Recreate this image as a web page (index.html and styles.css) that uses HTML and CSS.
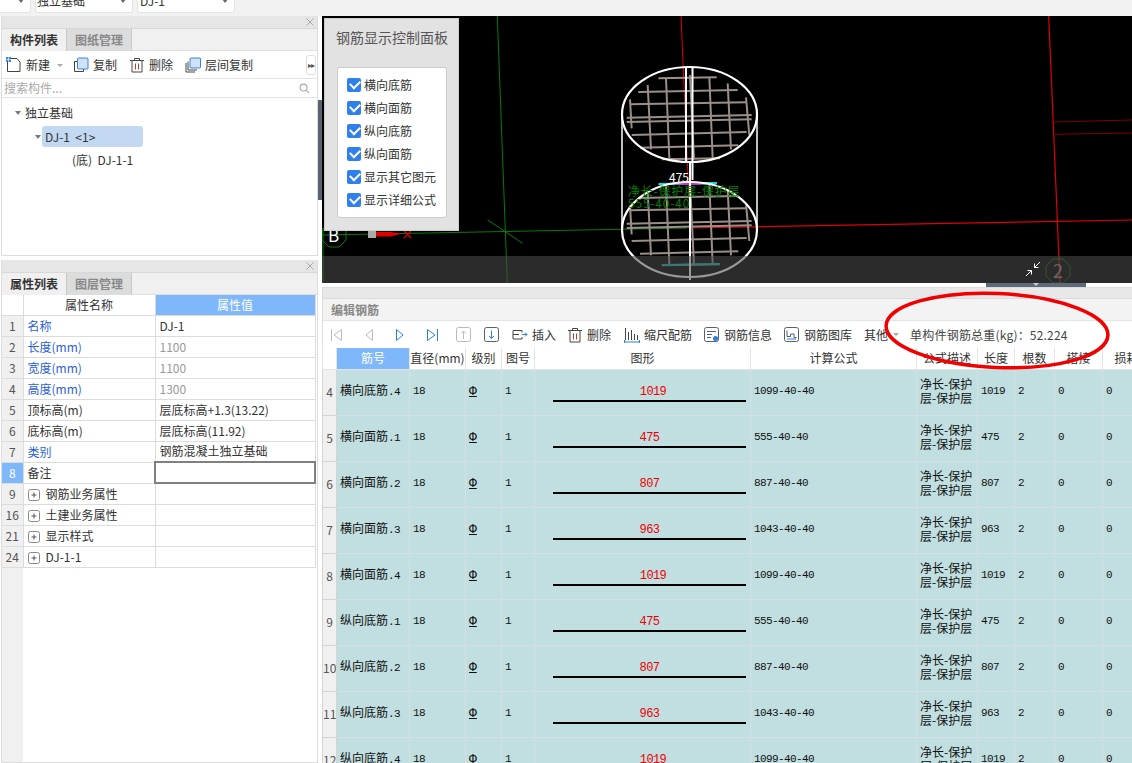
FILE: index.html
```html
<!DOCTYPE html>
<html lang="zh-CN">
<head>
<meta charset="utf-8">
<title>编辑钢筋</title>
<link rel="stylesheet" href="styles.css">
</head>
<body>
<svg class="defs" width="0" height="0" aria-hidden="true">
  <symbol id="i-new" viewBox="0 0 16 16"><path d="M1.500 4.500v10h12.500V5l-3-3.500H4" fill="#fff" stroke="#444"/><rect x="0" y="0" width="5" height="5" fill="#3b82e0"/><path d="M0 2.500h5M2.500 0v5" stroke="#fff" stroke-width=".6"/></symbol>
  <symbol id="i-copy" viewBox="0 0 16 16"><path d="M4 4.500H1.500v10h9V12" fill="none" stroke="#444"/><rect x="4.500" y="1" width="10.500" height="11" rx="1" fill="#cfe2f8" stroke="#3b82e0"/></symbol>
  <symbol id="i-trash" viewBox="0 0 16 16"><path d="M1 3.500h14M5.500 3.500V1.500h5v2M3 3.500v11.500h10V3.500" fill="none" stroke="#444"/><path d="M6.500 6.500v6M9.500 6.500v6" stroke="#d9302a"/></symbol>
  <symbol id="i-layer" viewBox="0 0 16 16"><path d="M1 6v9h9M3 4.500v8.500h9" fill="none" stroke="#444"/><rect x="5" y="1" width="10.500" height="10" rx="1" fill="#cfe2f8" stroke="#3b82e0"/></symbol>
  <symbol id="i-search" viewBox="0 0 12 12"><circle cx="5" cy="5" r="3.800" fill="none" stroke="#aaa" stroke-width="1.200"/><path d="M8 8l3 3" stroke="#aaa" stroke-width="1.200"/></symbol>
  <symbol id="i-close" viewBox="0 0 8 8"><path d="M.5.500l7 7M7.500.500l-7 7" stroke="#a8a8a8"/></symbol>
  <symbol id="i-plus" viewBox="0 0 12 12"><rect x=".5" y=".5" width="11" height="11" rx="2" fill="#fff" stroke="#888"/><path d="M3.500 6h5M6 3.500v5" stroke="#555"/></symbol>
  <symbol id="i-first" viewBox="0 0 11 14"><path d="M.5 1v12M10.500 1.500v11L3 7z" fill="none" stroke="#bbb"/></symbol>
  <symbol id="i-prev" viewBox="0 0 8 14"><path d="M7.500 1.500v11L1 7z" fill="none" stroke="#bbb"/></symbol>
  <symbol id="i-next" viewBox="0 0 8 14"><path d="M.5 1.500v11L7 7z" fill="none" stroke="#2a7de1"/></symbol>
  <symbol id="i-last" viewBox="0 0 11 14"><path d="M10.500 1v12M.5 1.500v11L8 7z" fill="none" stroke="#2a7de1"/></symbol>
  <symbol id="i-up" viewBox="0 0 16 16"><rect x=".5" y=".5" width="14" height="14" rx="2" fill="none" stroke="#bbb"/><path d="M7.500 12V4M5 6.500l2.500-2.500 2.500 2.500" fill="none" stroke="#bbb"/></symbol>
  <symbol id="i-down" viewBox="0 0 16 16"><rect x=".5" y=".5" width="14" height="14" rx="2" fill="none" stroke="#55606e"/><path d="M7.500 3.500v8M5 9l2.500 2.500L10 9" fill="none" stroke="#2a7de1"/></symbol>
  <symbol id="i-insert" viewBox="0 0 16 14"><path d="M10 3.500V1.500H1v8.500h9V8" fill="none" stroke="#444" transform="translate(0 1)"/><path d="M1 6.500h6" stroke="#444"/><path d="M10 6.500h5M13 4.500l2 2-2 2" fill="none" stroke="#2a7de1"/></symbol>
  <symbol id="i-ruler" viewBox="0 0 16 16"><path d="M1.500 1v12M4.500 5v8M7.500 3v10M10.500 7v6M13.500 8v5" stroke="#444"/><path d="M0 15h16M.5 13v3M15.500 13v3" stroke="#2a7de1"/></symbol>
  <symbol id="i-info" viewBox="0 0 16 16"><rect x=".5" y=".5" width="14" height="14" rx="2" fill="none" stroke="#55606e"/><path d="M3 4.500h9M3 7.500h5M3 10.500h4" stroke="#55606e"/><circle cx="11.500" cy="11.500" r="2.500" fill="#2a7de1"/></symbol>
  <symbol id="i-lib" viewBox="0 0 16 16"><rect x=".5" y=".5" width="14" height="14" rx="2" fill="none" stroke="#55606e"/><path d="M3 3.500v6h3.500V7H10v3.500h2.500" fill="none" stroke="#55606e"/><path d="M3 12h9" stroke="#2a7de1"/></symbol>
  <symbol id="i-mesh" viewBox="0 0 450 330">
    <g fill="none" stroke="#9a8e88" stroke-width="6">
      <path d="M130 55L305 52M70 96L368 90M45 133L395 127M35 173L410 165M35 186L410 178M50 225L395 216M75 263L370 256M140 298L315 295"/>
      <path d="M45 118L50 205M98 75L108 268M153 55L163 295M225 45L237 298M283 52L293 295M338 70L348 268M393 112L403 225"/>
    </g>
  </symbol>
</svg>

<div class="app">
  <header class="topbar">
    <div class="select sel-a"><span class="caret"></span></div>
    <div class="select sel-b"><span>独立基础</span><span class="caret"></span></div>
    <div class="select sel-c"><span>DJ-1</span><span class="caret"></span></div>
  </header>

  <div class="main">
    <aside class="side">
      <section class="panel panel-list">
        <div class="panel-head"><svg class="close"><use href="#i-close"/></svg></div>
        <div class="tabs"><div class="tab active">构件列表</div><div class="tab">图纸管理</div></div>
        <div class="tools">
          <svg class="ico"><use href="#i-new"/></svg><span class="tool-label">新建</span><span class="mini-caret"></span>
          <svg class="ico gap-copy"><use href="#i-copy"/></svg><span class="tool-label">复制</span>
          <svg class="ico gap-del"><use href="#i-trash"/></svg><span class="tool-label">删除</span>
          <svg class="ico gap-del"><use href="#i-layer"/></svg><span class="tool-label">层间复制</span>
          <span class="more">▸▸</span>
        </div>
        <div class="search"><span>搜索构件...</span><svg class="search-ico"><use href="#i-search"/></svg></div>
        <div class="tree">
          <div class="node level-1"><span class="tree-caret"></span>独立基础</div>
          <div class="node level-2"><span class="tree-caret"></span><span class="node-sel">DJ-1&nbsp; &lt;1&gt;</span></div>
          <div class="node level-3">(底)&nbsp; DJ-1-1</div>
        </div>
      </section>

      <section class="panel panel-props">
        <div class="panel-head"><svg class="close"><use href="#i-close"/></svg></div>
        <div class="tabs"><div class="tab active">属性列表</div><div class="tab">图层管理</div></div>
        <table class="props">
          <colgroup><col class="p-idx"><col class="p-name"><col class="p-val"></colgroup>
          <thead><tr><th class="idx"></th><th>属性名称</th><th class="hl">属性值</th></tr></thead>
          <tbody>
            <tr><td class="idx">1</td><td class="link">名称</td><td>DJ-1</td></tr>
            <tr><td class="idx">2</td><td class="link">长度(mm)</td><td class="muted">1100</td></tr>
            <tr><td class="idx">3</td><td class="link">宽度(mm)</td><td class="muted">1100</td></tr>
            <tr><td class="idx">4</td><td class="link">高度(mm)</td><td class="muted">1300</td></tr>
            <tr><td class="idx">5</td><td>顶标高(m)</td><td>层底标高+1.3(13.22)</td></tr>
            <tr><td class="idx">6</td><td>底标高(m)</td><td>层底标高(11.92)</td></tr>
            <tr><td class="idx">7</td><td class="link">类别</td><td>钢筋混凝土独立基础</td></tr>
            <tr><td class="idx hl">8</td><td>备注</td><td class="editing"></td></tr>
            <tr><td class="idx">9</td><td><svg class="plus"><use href="#i-plus"/></svg>钢筋业务属性</td><td></td></tr>
            <tr><td class="idx">16</td><td><svg class="plus"><use href="#i-plus"/></svg>土建业务属性</td><td></td></tr>
            <tr><td class="idx">21</td><td><svg class="plus"><use href="#i-plus"/></svg>显示样式</td><td></td></tr>
            <tr><td class="idx">24</td><td><svg class="plus"><use href="#i-plus"/></svg>DJ-1-1</td><td></td></tr>
          </tbody>
        </table>
        <div class="props-fill"></div>
      </section>
    </aside>

    <div class="splitter"><span class="splitter-handle"></span></div>

    <main class="work">
      <div class="viewport">
        <svg class="cad" width="810" height="267" viewBox="322 16 810 267">
          <g fill="none" stroke-width="1">
            <path d="M497.300 16L507.300 283" stroke="#0a7a0a"/>
            <path d="M322.700 235L687 228" stroke="#0a7a0a"/>
            <path d="M487.700 220L522.700 243.300" stroke="#0a7a0a"/>
            <path d="M323 228V283" stroke="#0a7a0a"/>
            <path d="M681 16L690 223" stroke="#e00000"/>
            <path d="M690 228L1132 220" stroke="#e00000" stroke-width="1.200"/>
            <path d="M1048.700 16L1060 283" stroke="#e00000" stroke-width="1.200"/>
            <path d="M1053.300 122L1132 120M1054 134.300L1132 133" stroke="#800000"/>
          </g>
          <use href="#i-mesh" x="615" y="60" width="150" height="110"/>
          <use href="#i-mesh" x="615" y="166" width="150" height="110"/>
          <path d="M659 184L717 183" stroke="#00e5e5" stroke-width="2"/>
          <path d="M673 183.500H702" stroke="#e000e0" stroke-width="2"/>
          <path d="M662 265L720 264" stroke="#19b5b5" stroke-width="2"/>
          <g fill="none" stroke="#fff">
            <ellipse cx="689.500" cy="114.500" rx="67.500" ry="47.500" stroke-width="2.200"/>
            <path d="M622 230C622 205 650 182 689.500 182C729 182 757 205 757 230C757 255 729 277 689.500 277C650 277 622 255 622 230Z" stroke-width="2.200"/>
            <path d="M622 114V230M757 114V230" stroke-width="1.500"/>
            <path d="M686 67V162M690 162V280M692.500 67V180" stroke-width="2"/>
          </g>
          <text class="cad-num" x="669" y="182">475</text>
          <text class="cad-formula" x="628" y="196">净长-保护层-保护层</text>
          <text class="cad-formula" x="628" y="208">555-40-40</text>
          <path d="M329 223h10l7 7v10l-7 7h-10l-7-7v-10z" fill="none" stroke="#0a7a0a"/>
          <text class="cad-axis" x="328" y="242">B</text>
          <rect x="368" y="230" width="8" height="8" fill="#aaa"/>
          <path d="M376 232h15l11 1.500-11 3h-15z" fill="#e00000"/>
          <path d="M404 231l7 7M411 231l-7 7" stroke="#e00000" stroke-width="1.300"/>
          <path d="M1053 259h10l7 7v10l-7 7h-10l-7-7v-10z" fill="none" stroke="#0a6a0a"/>
          <text class="cad-axis2" x="1053" y="278">2</text>
        </svg>
        <div class="view-shade"></div>
        <svg class="fit" width="16" height="16" viewBox="0 0 16 16"><path d="M15 1L9.500 6.500M9.500 2.500v4h4M1 15l5.500-5.500M6.500 13.500v-4h-4" fill="none" stroke="#fff"/></svg>
        <div class="ctrl">
          <div class="ctrl-title">钢筋显示控制面板</div>
          <div class="ctrl-box">
            <label class="chk"><input type="checkbox" checked><span class="box"></span>横向底筋</label>
            <label class="chk"><input type="checkbox" checked><span class="box"></span>横向面筋</label>
            <label class="chk"><input type="checkbox" checked><span class="box"></span>纵向底筋</label>
            <label class="chk"><input type="checkbox" checked><span class="box"></span>纵向面筋</label>
            <label class="chk"><input type="checkbox" checked><span class="box"></span>显示其它图元</label>
            <label class="chk"><input type="checkbox" checked><span class="box"></span>显示详细公式</label>
          </div>
        </div>
      </div>
      <div class="drawer"><span class="drawer-handle"></span></div>

      <div class="edit-gap"></div>
      <div class="edit-title">编辑钢筋</div>
      <div class="edit-tools">
        <svg class="nav n1"><use href="#i-first"/></svg>
        <svg class="nav n2"><use href="#i-prev"/></svg>
        <svg class="nav n3"><use href="#i-next"/></svg>
        <svg class="nav n4"><use href="#i-last"/></svg>
        <svg class="ico n5"><use href="#i-up"/></svg>
        <svg class="ico n6"><use href="#i-down"/></svg>
        <svg class="ico n7"><use href="#i-insert"/></svg><span class="tool-label">插入</span>
        <svg class="ico n8"><use href="#i-trash"/></svg><span class="tool-label">删除</span>
        <svg class="ico n9"><use href="#i-ruler"/></svg><span class="tool-label">缩尺配筋</span>
        <svg class="ico n10"><use href="#i-info"/></svg><span class="tool-label">钢筋信息</span>
        <svg class="ico n10"><use href="#i-lib"/></svg><span class="tool-label">钢筋图库</span>
        <span class="tool-label n11">其他</span><span class="mini-caret"></span>
        <span class="weight">单构件钢筋总重(kg)：52.224</span>
      </div>
      <div class="bars-wrap">
        <table class="bars">
          <colgroup>
            <col class="c-idx"><col class="c-name"><col class="c-dia"><col class="c-grade"><col class="c-fig"><col class="c-shape"><col class="c-calc"><col class="c-desc"><col class="c-len"><col class="c-cnt"><col class="c-lap"><col class="c-loss">
          </colgroup>
          <thead>
            <tr><th class="idx"></th><th class="hl">筋号</th><th>直径(mm)</th><th>级别</th><th>图号</th><th>图形</th><th>计算公式</th><th>公式描述</th><th>长度</th><th>根数</th><th>搭接</th><th>损耗</th></tr>
          </thead>
          <tbody>
            <tr><td class="idx">4</td><td>横向底筋<span class="num">.4</span></td><td class="num">18</td><td><span class="grade">Φ</span></td><td class="num">1</td><td><div class="shape"><span class="shape-val v-c">1019</span><span class="shape-line"></span></div></td><td class="num">1099-40-40</td><td class="desc">净长-保护<br>层-保护层</td><td class="num">1019</td><td class="num">2</td><td class="num">0</td><td class="num">0</td></tr>
            <tr><td class="idx">5</td><td>横向面筋<span class="num">.1</span></td><td class="num">18</td><td><span class="grade">Φ</span></td><td class="num">1</td><td><div class="shape"><span class="shape-val v-a">475</span><span class="shape-line"></span></div></td><td class="num">555-40-40</td><td class="desc">净长-保护<br>层-保护层</td><td class="num">475</td><td class="num">2</td><td class="num">0</td><td class="num">0</td></tr>
            <tr><td class="idx">6</td><td>横向面筋<span class="num">.2</span></td><td class="num">18</td><td><span class="grade">Φ</span></td><td class="num">1</td><td><div class="shape"><span class="shape-val v-a">807</span><span class="shape-line"></span></div></td><td class="num">887-40-40</td><td class="desc">净长-保护<br>层-保护层</td><td class="num">807</td><td class="num">2</td><td class="num">0</td><td class="num">0</td></tr>
            <tr><td class="idx">7</td><td>横向面筋<span class="num">.3</span></td><td class="num">18</td><td><span class="grade">Φ</span></td><td class="num">1</td><td><div class="shape"><span class="shape-val v-a">963</span><span class="shape-line"></span></div></td><td class="num">1043-40-40</td><td class="desc">净长-保护<br>层-保护层</td><td class="num">963</td><td class="num">2</td><td class="num">0</td><td class="num">0</td></tr>
            <tr><td class="idx">8</td><td>横向面筋<span class="num">.4</span></td><td class="num">18</td><td><span class="grade">Φ</span></td><td class="num">1</td><td><div class="shape"><span class="shape-val v-c">1019</span><span class="shape-line"></span></div></td><td class="num">1099-40-40</td><td class="desc">净长-保护<br>层-保护层</td><td class="num">1019</td><td class="num">2</td><td class="num">0</td><td class="num">0</td></tr>
            <tr><td class="idx">9</td><td>纵向底筋<span class="num">.1</span></td><td class="num">18</td><td><span class="grade">Φ</span></td><td class="num">1</td><td><div class="shape"><span class="shape-val v-a">475</span><span class="shape-line"></span></div></td><td class="num">555-40-40</td><td class="desc">净长-保护<br>层-保护层</td><td class="num">475</td><td class="num">2</td><td class="num">0</td><td class="num">0</td></tr>
            <tr><td class="idx">10</td><td>纵向底筋<span class="num">.2</span></td><td class="num">18</td><td><span class="grade">Φ</span></td><td class="num">1</td><td><div class="shape"><span class="shape-val v-a">807</span><span class="shape-line"></span></div></td><td class="num">887-40-40</td><td class="desc">净长-保护<br>层-保护层</td><td class="num">807</td><td class="num">2</td><td class="num">0</td><td class="num">0</td></tr>
            <tr><td class="idx">11</td><td>纵向底筋<span class="num">.3</span></td><td class="num">18</td><td><span class="grade">Φ</span></td><td class="num">1</td><td><div class="shape"><span class="shape-val v-a">963</span><span class="shape-line"></span></div></td><td class="num">1043-40-40</td><td class="desc">净长-保护<br>层-保护层</td><td class="num">963</td><td class="num">2</td><td class="num">0</td><td class="num">0</td></tr>
            <tr><td class="idx">12</td><td>纵向底筋<span class="num">.4</span></td><td class="num">18</td><td><span class="grade">Φ</span></td><td class="num">1</td><td><div class="shape"><span class="shape-val v-c">1019</span><span class="shape-line"></span></div></td><td class="num">1099-40-40</td><td class="desc">净长-保护<br>层-保护层</td><td class="num">1019</td><td class="num">2</td><td class="num">0</td><td class="num">0</td></tr>
          </tbody>
        </table>
      </div>
      <svg class="mark" width="240" height="90" viewBox="0 0 240 90"><ellipse cx="120" cy="44.500" rx="111" ry="37" transform="rotate(2.500 120 45)" fill="none" stroke="#f00000" stroke-width="3.500"/></svg>
    </main>
  </div>
</div>
</body>
</html>
```

FILE: styles.css
```css
* { box-sizing: border-box; }
html, body { margin: 0; padding: 0; }
body {
  width: 1132px;
  height: 763px;
  overflow: hidden;
  background: #fff;
  color: #333;
  font: 12px/16px "Noto Sans CJK SC", "Liberation Sans", sans-serif;
}
.defs { position: absolute; }
.app { display: flex; flex-direction: column; height: 763px; }

/* top strip */
.topbar {
  flex: none;
  height: 16px;
  background: #f2f2f2;
  display: flex;
  align-items: flex-end;
  gap: 4px;
  padding-bottom: 3px;
  margin-left: -67px;
  overflow: hidden;
}
.select {
  flex: none;
  width: 98px;
  height: 24px;
  background: #fff;
  border-radius: 3px;
  border: 1px solid #e2e2e2;
  display: flex;
  align-items: center;
  justify-content: space-between;
  padding: 0 6px 0 1px;
}
.sel-c { padding-left: 2px; }
.caret {
  margin-left: auto;
  border: 3px solid transparent;
  border-top: 4px solid #666;
  border-bottom: 0;
}

/* layout */
.main { flex: 1; min-height: 0; display: flex; }
.side { flex: none; width: 318px; display: flex; flex-direction: column; gap: 4px; padding-left: 1px; }
.panel { display: flex; flex-direction: column; border: 1px solid #dcdcdc; border-top: 0; background: #fff; }
.panel-list { height: 240px; }
.panel-props { flex: 1; min-height: 0; }
.panel-head {
  height: 12px;
  background: #e6e6e6;
  display: flex;
  align-items: center;
  justify-content: flex-end;
  padding-right: 3px;
}
.close { width: 8px; height: 8px; }
.tabs { height: 23px; background: #f0f0f0; display: flex; border-top: 1px solid #d8d8d8; border-bottom: 1px solid #e0e0e0; }
.tab {
  width: 65px;
  height: 22px;
  line-height: 22px;
  text-align: center;
  background: #dcdcdc;
  color: #888;
  font-weight: 700;
  border-right: 1px solid #c8c8c8;
}
.tab.active { background: #f0f0f0; color: #333; }

/* left toolbar */
.tools { height: 28px; display: flex; align-items: center; padding: 1px 0 0 4px; border-bottom: 1px solid #e4e4e4; position: relative; }
.ico { flex: none; width: 16px; height: 16px; }
.tool-label { margin-left: 4px; flex: none; }
.mini-caret {
  flex: none;
  margin-left: 7px;
  border: 3px solid transparent;
  border-top: 3px solid #aaa;
  border-bottom: 0;
}
.gap-copy { margin-left: 10px; }
.gap-del { margin-left: 12px; }
.more {
  margin-left: auto;
  margin-right: 1px;
  width: 10px;
  height: 20px;
  border: 1px solid #ddd;
  border-radius: 3px;
  font-size: 8px;
  line-height: 18px;
  text-align: center;
  letter-spacing: -1px;
  color: #555;
  overflow: hidden;
}
.search { height: 19px; display: flex; align-items: center; justify-content: space-between; padding: 0 7px 0 2px; color: #aaa; border-bottom: 1px solid #e4e4e4; }
.search-ico { width: 11px; height: 11px; }
.tree { padding-top: 3px; }
.node { height: 24px; display: flex; align-items: center; }
.level-1 { padding-left: 13px; }
.level-2 { padding-left: 33px; height: 23px; }
.level-3 { padding-left: 70px; }
.tree-caret {
  flex: none;
  width: 0;
  margin-right: 4px;
  border: 3px solid transparent;
  border-top: 4px solid #777;
  border-bottom: 0;
}
.level-2 .tree-caret { margin-right: 1px; }
.node-sel { width: 101px; height: 21px; line-height: 21px; padding-left: 3px; background: #c3d9f1; border-radius: 3px; }

/* property table */
.props { width: 313px; border-collapse: collapse; table-layout: fixed; flex: none; }
.p-idx { width: 21px; }
.p-name { width: 132px; }
.p-val { width: 160px; }
.props th, .props td { height: 21px; padding: 0 0 0 4px; border: 1px solid #dcdcdc; border-top: 0; font-weight: 400; white-space: nowrap; overflow: hidden; }
.props thead th { height: 20px; text-align: center; padding: 0; }
.props td.idx { text-align: center; padding: 0; background: #f0f0f0; font-size: 12px; color: #555; border-left: 0; }
.props th.idx { border-left: 0; }
.props .hl, .bars .hl { background: #7fb8fa; color: #fff; }
.props td.idx.hl { background: #7fb8fa; color: #fff; }
.link { color: #2a5fd8; }
.muted { color: #999; }
.props td.editing { border: 2px solid #808080; }
.plus { width: 12px; height: 12px; margin: 0 6px 0 0; vertical-align: -2px; }
.props-fill { flex: 1; border-left: 21px solid #f0f0f0; }

/* splitter */
.splitter { flex: none; width: 4px; position: relative; }
.splitter-handle { position: absolute; left: 0; top: 84px; width: 4px; height: 100px; background: #5a6270; }

/* work area */
.work { flex: 1; min-width: 0; display: flex; flex-direction: column; position: relative; }
.viewport { flex: none; height: 267px; background: #000; position: relative; overflow: hidden; }
.cad { display: block; }
.cad-num { font-size: 12px; fill: #fff; }
.cad-formula { font-size: 12px; letter-spacing: 0.8px; fill: #008000; }
.cad-axis { font-size: 17px; fill: #fff; }
.cad-axis2 { font-size: 18px; fill: #8a8a8a; }
.view-shade { position: absolute; left: 0; right: 0; top: 240px; height: 27px; background: rgba(75, 75, 75, 0.57); }
.fit { position: absolute; left: 703px; top: 245px; }
.ctrl {
  position: absolute;
  left: 2px;
  top: 2px;
  width: 135px;
  height: 213px;
  background: #e2e2e2;
  border: 1px solid #ccc;
  padding: 0 12px;
}
.ctrl-title { height: 48px; margin-left: -1px; padding-top: 9px; font-size: 14px; line-height: 18px; color: #555; white-space: nowrap; }
.ctrl-box { width: 110px; height: 151px; background: #fff; border: 1px solid #ccc; border-radius: 3px; padding: 5px 0 0 9px; }
.chk { display: flex; align-items: center; height: 23px; white-space: nowrap; }
.chk input { display: none; }
.box { flex: none; width: 14px; height: 14px; margin-right: 3px; border-radius: 2px; background: #2f80ed; position: relative; }
.box::after {
  content: "";
  position: absolute;
  left: 3px;
  top: 2px;
  width: 8px;
  height: 5px;
  border-left: 2px solid #fff;
  border-bottom: 2px solid #fff;
  transform: rotate(-45deg);
}
.drawer { flex: none; height: 4px; position: relative; }
.drawer-handle { position: absolute; left: 664px; top: 0; width: 100px; height: 4px; background: #5f6b7a; }
.drawer-handle::after {
  content: "";
  position: absolute;
  left: 47px;
  top: 0;
  border: 3px solid transparent;
  border-top: 3px solid #ccc;
  border-bottom: 0;
}
.edit-gap { flex: none; height: 11px; background: #e8e8e8; border-top: 1px solid #dcdcdc; border-left: 1px solid #dcdcdc; }
.edit-title { flex: none; height: 22px; line-height: 22px; padding-left: 8px; background: #f3f3f3; color: #888; font-weight: 700; border-top: 1px solid #dcdcdc; border-left: 1px solid #dcdcdc; }
.edit-tools { flex: none; height: 28px; display: flex; align-items: center; background: #fff; border-top: 1px solid #e4e4e4; border-left: 1px solid #dcdcdc; white-space: nowrap; }
.nav { flex: none; height: 14px; }
.n1 { width: 11px; margin-left: 8px; }
.n2 { width: 8px; margin-left: 23px; }
.n3 { width: 8px; margin-left: 23px; }
.n4 { width: 11px; margin-left: 23px; }
.n5 { margin-left: 18px; }
.n6 { margin-left: 12px; }
.n7 { margin-left: 12px; }
.n8 { margin-left: 11px; }
.n9 { margin-left: 13px; }
.n10 { margin-left: 12px; }
.n11 { margin-left: 12px; }
.edit-tools .mini-caret { margin-left: 5px; }
.weight { margin-left: 11px; color: #444; flex: none; letter-spacing: 0.2px; }

.bars-wrap { flex: 1; min-height: 0; overflow: hidden; }
.bars { width: 828px; border-collapse: collapse; table-layout: fixed; }
.c-idx { width: 14px; }
.c-name { width: 73px; }
.c-dia { width: 56px; }
.c-grade { width: 36px; }
.c-fig { width: 33px; }
.c-shape { width: 216px; }
.c-calc { width: 166px; }
.c-desc { width: 61px; }
.c-len { width: 37px; }
.c-cnt { width: 40px; }
.c-lap { width: 48px; }
.c-loss { width: 48px; }
.bars th { height: 21px; padding: 0; font-weight: 400; background: #fff; border: 1px solid #e4e4e4; border-top: 0; white-space: nowrap; overflow: hidden; }
.bars td { height: 46px; padding: 0 0 2px 3px; background: #c1dee0; border: 1px solid #d8dfe0; border-top: 0; color: #111; white-space: nowrap; overflow: hidden; }
.bars td.idx { padding: 0; text-align: center; background: #f0f0f0; color: #555; border-color: #d4d4d4; font-size: 12px; }
.num { font-family: "Liberation Mono", "DejaVu Sans Mono", monospace; font-size: 11px; letter-spacing: -0.6px; }
.grade { font-family: "Liberation Mono", monospace; font-size: 13px; text-decoration: underline; }
.shape { position: relative; height: 26px; margin-left: 15px; width: 193px; text-align: center; }
.shape-val { font-family: "Liberation Mono", monospace; font-size: 12px; letter-spacing: -0.6px; line-height: 14px; color: #f00000; display: block; padding-top: 7px; box-sizing: content-box; }
.v-c { margin-left: 7px; }
.v-a { margin-left: 0; }
.shape-line { position: absolute; left: 0; right: 0; top: 22px; height: 2px; background: #000; }
.bars td.desc { line-height: 14px; padding: 0 0 3px 3px; }

.mark { position: absolute; left: 555px; top: 270px; pointer-events: none; }
```
